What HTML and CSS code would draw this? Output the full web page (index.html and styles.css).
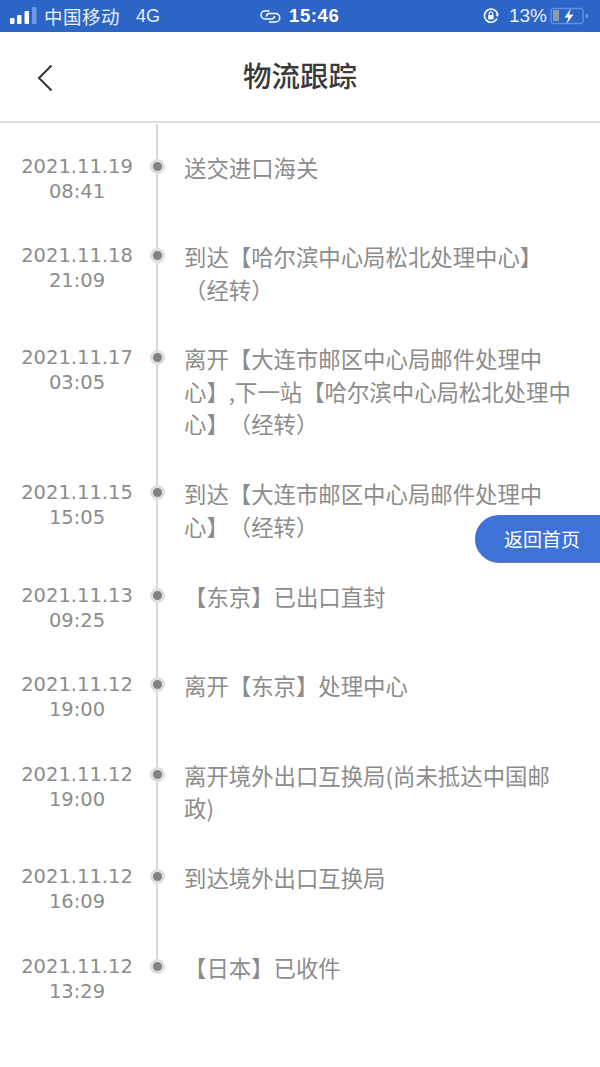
FILE: index.html
```html
<!DOCTYPE html>
<html lang="zh-CN">
<head>
<meta charset="utf-8">
<title>物流跟踪</title>
<link rel="stylesheet" href="styles.css">
</head>
<body>
<div class="page">
  <div class="status">
    <div class="status-left">
      <svg class="signal" width="27" height="20" viewBox="0 0 27 20"><rect x="0" y="12" width="4.500" height="6" rx="1" fill="#fff"/><rect x="7" y="9" width="4.500" height="9" rx="1" fill="#fff"/><rect x="14.500" y="5" width="4.500" height="13" rx="1" fill="#fff"/><rect x="22" y="1" width="4.500" height="17" rx="1" fill="#6f9be6"/></svg>
      <span class="carrier">中国移动</span>
      <span class="net">4G</span>
    </div>
    <div class="status-center">
      <svg width="22" height="15" viewBox="0 0 22 15" fill="none" stroke="#fff" stroke-width="1.500"><path d="M10.500 2H6a4 4 0 0 0 0 8h6.500a3 3 0 0 0 3-3"/><path d="M7.500 7.500a3 3 0 0 1 3-3H16.500a4.200 4.200 0 0 1 0 8.500H10"/></svg>
      <span class="clock">15:46</span>
    </div>
    <div class="status-right">
      <svg width="16" height="16" viewBox="0 0 16 16" fill="none"><path d="M14 10.500A6.600 6.600 0 1 1 14.600 7" stroke="#fff" stroke-width="1.600"/><path d="M12.600 6.600h3.400L14.300 9z" fill="#fff"/><rect x="5.200" y="7" width="5.400" height="4.400" fill="#fff"/><path d="M6.200 7V5.600a1.700 1.700 0 0 1 3.400 0V7" stroke="#fff" stroke-width="1.100"/></svg>
      <span class="percent">13%</span>
      <svg width="38" height="18" viewBox="0 0 38 18" fill="none"><rect x="1" y="1.500" width="32" height="15" rx="3" stroke="#5f8fe0" stroke-width="1.500"/><rect x="3" y="3" width="6" height="11" fill="#8f9aa8"/><path d="M21 1.500l-6.500 9h4l-2 6.500 7-9.500h-4.500z" fill="#fff"/><rect x="36" y="7" width="1.500" height="4" fill="#7ea6ea"/></svg>
    </div>
  </div>

  <header class="nav">
    <svg class="back" width="18" height="30" viewBox="0 0 18 30" fill="none"><path d="M15.500 2.500L3 15l12.500 12.500" stroke="#333" stroke-width="2"/></svg>
    <h1 class="title">物流跟踪</h1>
  </header>

  <main class="timeline">
    <div class="row">
      <div class="when">2021.11.19<br>08:41</div>
      <div class="dot"></div>
      <div class="what">送交进口海关</div>
    </div>
    <div class="row">
      <div class="when">2021.11.18<br>21:09</div>
      <div class="dot"></div>
      <div class="what">到达【哈尔滨中心局松北处理中心】（经转）</div>
    </div>
    <div class="row">
      <div class="when">2021.11.17<br>03:05</div>
      <div class="dot"></div>
      <div class="what">离开【大连市邮区中心局邮件处理中心】,下一站【哈尔滨中心局松北处理中心】（经转）</div>
    </div>
    <div class="row">
      <div class="when">2021.11.15<br>15:05</div>
      <div class="dot"></div>
      <div class="what">到达【大连市邮区中心局邮件处理中心】（经转）</div>
    </div>
    <div class="row">
      <div class="when">2021.11.13<br>09:25</div>
      <div class="dot"></div>
      <div class="what">【东京】已出口直封</div>
    </div>
    <div class="row">
      <div class="when">2021.11.12<br>19:00</div>
      <div class="dot"></div>
      <div class="what">离开【东京】处理中心</div>
    </div>
    <div class="row">
      <div class="when">2021.11.12<br>19:00</div>
      <div class="dot"></div>
      <div class="what">离开境外出口互换局(尚未抵达中国邮政)</div>
    </div>
    <div class="row">
      <div class="when">2021.11.12<br>16:09</div>
      <div class="dot"></div>
      <div class="what">到达境外出口互换局</div>
    </div>
    <div class="row last">
      <div class="when">2021.11.12<br>13:29</div>
      <div class="dot"></div>
      <div class="what">【日本】已收件</div>
    </div>
  </main>

  <div class="home-btn">返回首页</div>
</div>
</body>
</html>
```
FILE: styles.css
```css
* { box-sizing: border-box; }
html, body { margin: 0; padding: 0; background: #fff; }
body { font-family: "Noto Sans CJK SC", "Noto Sans", sans-serif; text-spacing-trim: space-all; }
.page { position: relative; width: 600px; height: 1067px; overflow: hidden; }

.status {
  height: 32px;
  background: #2c65c6;
  color: #fff;
  display: flex;
  align-items: center;
  justify-content: space-between;
  padding: 0 12px 0 10px;
  position: relative;
}
.status-left { display: flex; align-items: center; }
.signal { margin-right: 7px; }
.carrier { font-size: 18.500px; letter-spacing: .5px; color: #e8eefa; }
.net { font-size: 18px; margin-left: 16px; font-family: "Liberation Sans", sans-serif; color: #e8eefa; }
.status-center {
  position: absolute;
  left: 259px;
  top: 0;
  height: 32px;
  display: flex;
  align-items: center;
  gap: 8px;
}
.clock { font-size: 18.500px; font-weight: 700; letter-spacing: .6px; font-family: "Liberation Sans", sans-serif; }
.status-right { display: flex; align-items: center; }
.percent { font-size: 19px; margin: 0 3px 0 10px; font-family: "Liberation Sans", sans-serif; color: #e8eefa; }

.nav {
  height: 91px;
  border-bottom: 2px solid #dedede;
  display: flex;
  align-items: center;
  justify-content: center;
  position: relative;
}
.back { position: absolute; left: 36px; top: 31px; }
.title { margin: 0 0 2px; font-size: 28.500px; font-weight: 500; color: #3a3a3a; line-height: 1.2; }

.timeline { padding-top: 30.500px; }
.row { display: flex; align-items: flex-start; position: relative; }
.row::before {
  content: "";
  position: absolute;
  left: 156px;
  width: 2px;
  top: -30px;
  bottom: 0;
  background: #d8d8d8;
}
.row + .row::before { top: 0; }
.row.last::before { bottom: auto; height: 12px; }
.when {
  width: 154px;
  text-align: center;
  font-family: "DejaVu Sans", sans-serif;
  font-size: 19.500px;
  line-height: 25px;
  color: #8c8c8c;
  padding-bottom: 39.500px;
}
.dot {
  position: relative;
  flex: none;
  width: 15px;
  height: 15px;
  margin: 5px 0 0 -4px;
  border-radius: 50%;
  background: #828282;
  border: 3.500px solid #dedede;
}
.what {
  flex: 1;
  margin: -3px 0 0 19px;
  padding: 0 26px 40.400px 0;
  font-size: 22.400px;
  line-height: 32.500px;
  color: #8c8c8c;
}

.home-btn {
  position: absolute;
  left: 475px;
  top: 515px;
  width: 125px;
  height: 48px;
  border-radius: 24px 0 0 24px;
  background: #3f72d6;
  border-bottom: 1px solid #6d7f9f;
  color: #fff;
  font-size: 19px;
  line-height: 47px;
  padding-left: 29px;
}
```
